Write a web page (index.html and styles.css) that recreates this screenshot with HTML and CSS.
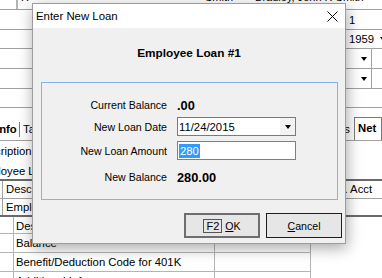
FILE: index.html
```html
<!DOCTYPE html>
<html lang="en">
<head>
  <meta charset="UTF-8" />
  <title>Enter New Loan</title>
  <link rel="stylesheet" href="styles.css">
</head>
<body>
  <div class="app">
    <div class="top-row">
      <span class="top-box"></span>
      <span class="top-txt">R</span>
      <span class="top-txt smith">Smith</span>
      <span class="top-txt fullname">Bradley, John R Smith</span>
    </div>

    <div class="field"><span class="val">1</span></div>
    <div class="field short"><span class="val">1959 <i class="tri"></i></span></div>
    <div class="field"><span class="val drop"><i class="tri"></i></span></div>
    <div class="field"><span class="val drop"><i class="tri"></i></span></div>
    <div class="field short"><span class="val"></span></div>

    <div class="tabs">
      <span class="tab tab-info">Info</span>
      <span class="tab tab-sep">Taxes</span>
      <span class="tab tab-ded">Deductions</span>
      <span class="tab tab-net">Net</span>
    </div>

    <div class="list-row"><span class="cut-desc">Description</span></div>
    <div class="list-row"><span class="cut-emp">Employee Loan</span></div>

    <div class="detail">
      <div class="detail-row">
        <span class="d-cell">Description</span>
        <span class="d-acct">Exp. Acct</span>
      </div>
      <div class="detail-row last">
        <span class="d-cell">Employee Loan</span>
      </div>
    </div>

    <div class="grid">
      <span class="g0"></span><span class="g1">Description</span><span class="g2"></span><span class="g3"></span>
      <span class="g0"></span><span class="g1">Balance</span><span class="g2"></span><span class="g3"></span>
      <span class="g0"></span><span class="g1">Benefit/Deduction Code for 401K</span><span class="g2"></span><span class="g3"></span>
      <span class="g0"></span><span class="g1">Additional Info</span><span class="g2"></span><span class="g3"></span>
    </div>
  </div>

  <div class="dialog">
    <div class="titlebar">
      <span class="title">Enter New Loan</span>
      <svg class="close" width="11" height="11" viewBox="0 0 11 11">
        <path d="M0.5 0.5 L10.5 10.5 M10.5 0.5 L0.5 10.5" stroke="#000" stroke-width="1" fill="none"/>
      </svg>
    </div>

    <div class="heading">Employee Loan #1</div>

    <div class="group">
      <div class="row r1">
        <span class="lbl">Current Balance</span>
        <span class="num">.00</span>
      </div>
      <div class="row r2">
        <span class="lbl">New Loan Date</span>
        <div class="combo">
          <span class="combo-text">11/24/2015</span>
          <span class="combo-btn"><i class="tri"></i></span>
        </div>
      </div>
      <div class="row r3">
        <span class="lbl">New Loan Amount</span>
        <div class="amount"><span class="sel">280</span></div>
      </div>
      <div class="row r4">
        <span class="lbl">New Balance</span>
        <span class="num">280.00</span>
      </div>
    </div>

    <div class="buttons">
      <div class="btn default"><span class="key">F2</span><span><u>O</u>K</span></div>
      <div class="btn"><span><u>C</u>ancel</span></div>
    </div>
  </div>
</body>
</html>
```

FILE: styles.css
```css
body {
  margin: 0;
  font-family: "Liberation Sans", Arial, sans-serif;
  font-size: 11px;
  color: #000;
  background-color: #fff;
  overflow: hidden;
}
.app {
  width: 382px;
  height: 278px;
  overflow: hidden;
}

/* background window */
.top-row {
  height: 9px;
  border-bottom: 1px solid #a0a0a0;
  display: flex;
  overflow: hidden;
  line-height: 12px;
}
.top-box {
  width: 16px;
  border-right: 2px solid #b4b4b4;
}
.top-txt {
  margin-top: -9px;
  margin-left: 3px;
}
.smith {
  margin-left: 176px;
}
.fullname {
  margin-left: 22px;
}
.field {
  height: 19px;
  border-bottom: 1px solid #a0a0a0;
  display: flex;
  align-items: center;
}
.field.short {
  height: 18px;
}
.val {
  margin-left: auto;
  width: 33px;
  padding-left: 3px;
  display: flex;
  align-items: center;
  gap: 6px;
  font-size: 11.3px;
}
.val.drop {
  width: 22px;
  margin-right: 10px;
  height: 100%;
  border-right: 1px solid #a0a0a0;
  justify-content: flex-end;
  padding-right: 4px;
}
.tri {
  display: inline-block;
  width: 0;
  height: 0;
  border-left: 3.5px solid transparent;
  border-right: 3.5px solid transparent;
  border-top: 4px solid #000;
}
.tabs {
  height: 32px;
  border-bottom: 1px solid #a0a0a0;
  display: flex;
  align-items: flex-end;
  overflow: hidden;
  font-size: 11.3px;
}
.tab {
  height: 21px;
  line-height: 21px;
  white-space: nowrap;
}
.tab-info {
  font-weight: bold;
  margin-left: -4px;
  width: 23px;
}
.tab-sep {
  border-left: 1px solid #808080;
  height: 15px;
  line-height: 15px;
  margin-bottom: 3px;
  padding-left: 3px;
}
.tab-ded {
  margin-left: auto;
  padding-right: 4px;
}
.tab-net {
  font-weight: bold;
  border: 1px solid #7a7a7a;
  border-bottom: none;
  height: 22px;
  padding: 0 3px;
  width: 20px;
}
.list-row {
  height: 20px;
  line-height: 20px;
  white-space: nowrap;
  font-size: 11.3px;
}
.cut-desc {
  margin-left: -25px;
}
.cut-emp {
  margin-left: -25px;
}
.detail {
  margin-top: -2px;
  border-top: 2px solid #6a6a6a;
  border-bottom: 2px solid #6a6a6a;
}
.detail-row {
  height: 17px;
  border-bottom: 1px solid #a0a0a0;
  display: flex;
  align-items: center;
  font-size: 11.3px;
}
.detail-row.last {
  border-bottom: none;
  height: 16px;
}
.d-cell {
  margin-left: 2px;
  border-left: 1px solid #a0a0a0;
  height: 100%;
  line-height: 17px;
  padding-left: 3px;
}
.d-acct {
  margin-left: auto;
  width: 57px;
  line-height: 17px;
  white-space: nowrap;
}
.grid {
  display: grid;
  grid-template-columns: 14px 201px 96px 1fr;
  grid-template-rows: 17px 19px 19px 19px;
  font-size: 11.3px;
}
.grid span {
  border-bottom: 1px solid #b4b4b4;
  line-height: 18px;
  white-space: nowrap;
  overflow: hidden;
}
.g0, .g1, .g2 {
  border-right: 1px solid #b4b4b4;
}
.g1 {
  padding-left: 2px;
}
.g3 {
  border-bottom: none !important;
}

/* dialog */
.dialog {
  position: absolute;
  left: 32px;
  top: 3px;
  width: 312px;
  height: 239px;
  border: 1px solid #9c9c9c;
  background-color: #f0f0f0;
  box-shadow: 1px 4px 14px rgba(0, 0, 0, 0.35);
  display: flex;
  flex-direction: column;
}
.titlebar {
  height: 24px;
  background-color: #fff;
  display: flex;
  align-items: center;
  padding: 0 7px 0 3px;
}
.title {
  flex: 1;
  font-size: 11.4px;
}
.heading {
  margin-top: 18px;
  text-align: center;
  font-weight: bold;
  font-size: 11.8px;
  line-height: 14px;
}
.group {
  margin: 22px 7px 0 8px;
  height: 103px;
  padding-top: 13px;
  border: 1px solid #84b4e4;
}
.row {
  display: flex;
  align-items: center;
}
.r1 { height: 18px; }
.r2 { height: 19px; margin-top: 3px; }
.r3 { height: 19px; margin-top: 5px; }
.r4 { height: 18px; margin-top: 8px; }
.lbl {
  width: 125px;
  text-align: right;
  margin-right: 10px;
  font-size: 10.6px;
}
.num {
  font-weight: bold;
  font-size: 12.8px;
}
.combo {
  width: 117px;
  height: 17px;
  border: 1px solid #7a7a7a;
  background-color: #fff;
  display: flex;
  align-items: center;
  font-size: 11.3px;
}
.combo-text {
  padding-left: 1px;
}
.combo-btn {
  margin-left: auto;
  width: 15px;
  height: 100%;
  background-color: #f3f3f3;
  display: flex;
  align-items: center;
  justify-content: center;
}
.amount {
  width: 116px;
  height: 17px;
  padding-left: 1px;
  border: 1px solid #3d8ee0;
  background-color: #fff;
  display: flex;
  align-items: center;
  font-size: 11.3px;
}
.sel {
  background-color: #3399ff;
  color: #fff;
  line-height: 14px;
  padding: 0 1px;
}
.buttons {
  display: flex;
  justify-content: flex-end;
  gap: 6px;
  margin: 13px 3px 0 0;
}
.btn {
  width: 76px;
  height: 25px;
  box-sizing: border-box;
  border: 1px solid #1e1e1e;
  background-color: #e6e6e6;
  display: flex;
  align-items: center;
  justify-content: center;
  font-size: 10.6px;
}
.btn.default {
  border: 2px solid #6e6e6e;
}
.key {
  border: 1px solid #555;
  padding: 0 2px;
  line-height: 12px;
  margin-right: 3px;
  font-size: 11px;
}
```
